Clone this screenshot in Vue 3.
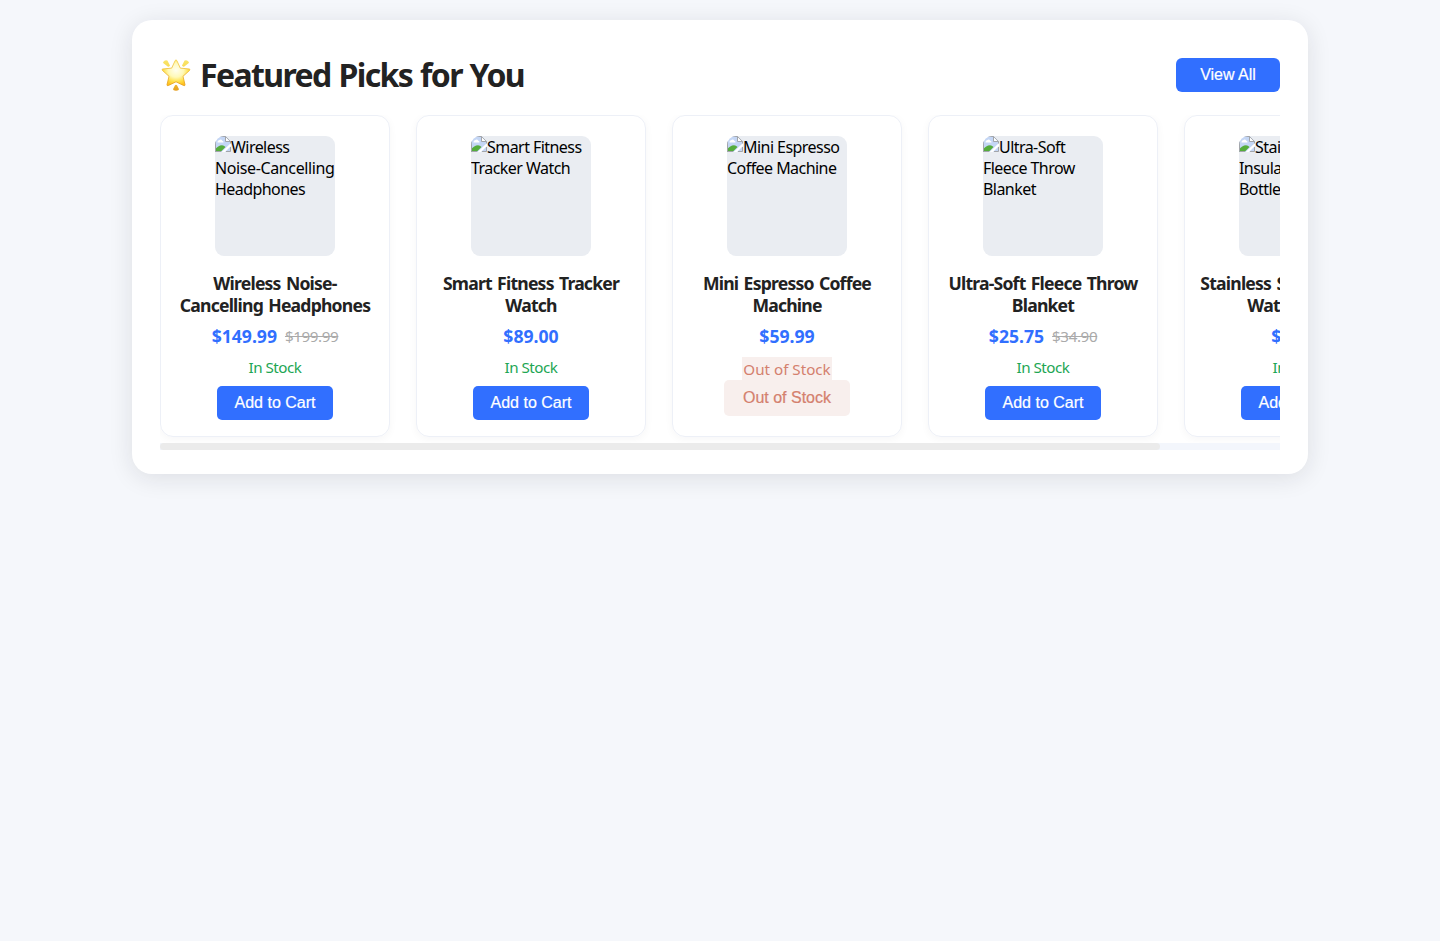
<script setup>
const products = [
  { name: ['Wireless Noise-', 'Cancelling Headphones'], alt: ['Wireless', 'Noise-Cancelling', 'Headphones'], price: '$149.99', old: '$199.99', stock: true },
  { name: ['Smart Fitness Tracker', 'Watch'], alt: ['Smart Fitness', 'Tracker Watch'], price: '$89.00', stock: true },
  { name: ['Mini Espresso Coffee', 'Machine'], alt: ['Mini Espresso', 'Coffee Machine'], price: '$59.99', stock: false },
  { name: ['Ultra-Soft Fleece Throw', 'Blanket'], alt: ['Ultra-Soft', 'Fleece Throw', 'Blanket'], price: '$25.75', old: '$34.90', stock: true },
  { name: ['Stainless Steel Insulated', 'Water Bottle'], alt: ['Stainless Steel', 'Insulated Water', 'Bottle'], price: '$19.99', stock: true },
]
</script>

<template>
  <section class="panel">
    <header class="head">
      <svg class="star" viewBox="0 0 32 34" width="32" height="34">
        <defs>
          <linearGradient id="gold" x1="0" y1="0" x2="0" y2="1">
            <stop offset="0" stop-color="#f9e468" />
            <stop offset="0.6" stop-color="#f6cf3c" />
            <stop offset="1" stop-color="#e59e1e" />
          </linearGradient>
          <linearGradient id="edge" x1="0" y1="0" x2="0" y2="1">
            <stop offset="0" stop-color="#f3cb45" />
            <stop offset="1" stop-color="#e39a16" />
          </linearGradient>
          <radialGradient id="shine" cx="0.5" cy="0.4" r="0.6">
            <stop offset="0" stop-color="#fffef0" />
            <stop offset="0.45" stop-color="#fff9b8" />
            <stop offset="0.75" stop-color="#ffe04a" />
            <stop offset="1" stop-color="#ffbe1a" />
          </radialGradient>
        </defs>
        <path d="M3.200 4Q5 1.400 7.400 2.600L10 7.600Q9.600 9 8 8.700L3.500 5.300Q2.800 4.800 3.200 4ZM28.800 4Q27 1.400 24.600 2.600L22 7.600Q22.400 9 24 8.700L28.500 5.300Q29.200 4.800 28.800 4ZM15 27.300Q16 26.200 17 27.300L18.900 31Q19 32.700 16 32.700Q13 32.700 13.100 31Z" fill="url(#gold)" />
        <path d="M15.200 2.500Q16 1 16.800 2.500L20.300 10.100L29.300 11Q30.600 11.400 29.500 12.500L23 18.300L25 26.700Q25 28.200 23.600 27.500L16 23.800L8.400 27.500Q7 28.200 7 26.700L9 18.300L2.500 12.500Q1.400 11.400 2.700 11L11.700 10.100Z" fill="url(#shine)" stroke="url(#edge)" stroke-width=".8" />
      </svg>
      <h1>Featured Picks for You</h1>
      <button class="btn view">View All</button>
    </header>

    <div class="list">
      <article v-for="p in products" :key="p.price" class="card">
        <div class="thumb">
          <svg class="broken" viewBox="0 0 16 16" width="16" height="16">
            <path d="M0 0H10.500L15.500 5V16H0Z" fill="#c4d6f5" />
            <path d="M2.500 6Q2.500 4.500 4 4.300Q6 2.300 7.300 4.700Q8.700 5 8.500 6.500H2.500Z" fill="#fff" />
            <path d="M0 15.500V13.500Q3 9.500 7 9.300Q9 9.600 10.500 11L6 15.500Z" fill="#55ad3c" />
            <path d="M6.500 16L16 7V10L10 16Z" fill="#fff" />
            <path d="M0 .5H10.500L15.500 5.500V7.500M10.500 .5V5.500H15.500M.5 0V15.500H6M11 15.500H15.500V11" fill="none" stroke="#a2a5aa" />
            <path d="M11 1.500V5H14.500Z" fill="#fff" />
          </svg>
          <div v-for="l in p.alt" :key="l" class="alt" :class="{ loose: l.includes('-Canc') }">{{ l }}</div>
        </div>
        <h2><span v-for="l in p.name" :key="l">{{ l }}</span></h2>
        <div class="prices">
          <span class="price">{{ p.price }}</span>
          <span v-if="p.old" class="old">{{ p.old }}</span>
        </div>
        <template v-if="p.stock">
          <div class="in">In Stock</div>
          <button class="btn add">Add to Cart</button>
        </template>
        <template v-else>
          <div class="out">Out of Stock</div>
          <button class="btn gone">Out of Stock</button>
        </template>
      </article>
    </div>
    <div class="track"><div class="bar"></div></div>
  </section>
</template>

<style>
html { background: #f5f7fb; }
#app { display: flow-root; min-height: 100vh; background: #f5f7fb; }
</style>

<style scoped>
.panel {
  box-sizing: border-box;
  width: 1176px;
  height: 454px;
  margin: 20px auto 0;
  padding: 36px 28px 24px;
  background: #fff;
  border-radius: 20px;
  box-shadow: 0 4px 24px rgba(30, 30, 40, .11);
  font-family: "Noto Sans", sans-serif;
  color: #222;
}
.head { display: flex; align-items: center; height: 38px; }
.star { flex: none; margin-right: 8px; }
h1 { margin: 0; font-size: 32px; line-height: 38px; font-weight: 700; letter-spacing: -1.6px; word-spacing: 1px; white-space: nowrap; }
.btn {
  border: 0;
  padding: 0;
  border-radius: 5px;
  background: #316fff;
  color: #fff;
  font: 16px "Liberation Sans", Arial, sans-serif;
  text-align: center;
  -webkit-text-stroke: .2px currentColor;
}
.view { margin-left: auto; width: 104px; height: 34px; border-radius: 6px; }
.list { display: flex; gap: 26px; overflow: hidden; height: 328px; margin-top: 21px; }
.card {
  box-sizing: border-box;
  flex: 0 0 230px;
  height: 322px;
  padding-top: 20px;
  display: flex;
  flex-direction: column;
  align-items: center;
  border: 1px solid #edf0f7;
  border-radius: 13px;
  box-shadow: 0 2px 8px rgba(30, 34, 55, .04);
}
.thumb { width: 120px; height: 120px; flex: none; border-radius: 9px; background: #eaedf2; overflow: hidden; color: #000; }
.broken { float: left; }
.alt { font-size: 16px; line-height: 21px; letter-spacing: -.55px; white-space: nowrap; position: relative; top: 1px; }
.loose { letter-spacing: -.38px; }
h2 { margin: 16px 0 0; font-size: 17.600px; line-height: 22px; font-weight: 700; letter-spacing: -.8px; word-spacing: 1.500px; text-align: center; white-space: nowrap; }
h2 span { display: block; }
.prices { display: flex; align-items: center; gap: 8px; height: 24px; margin-top: 8px; }
.price { color: #316fff; font-size: 17.600px; font-weight: 700; letter-spacing: 0; }
.old { color: #aaa; font-size: 15.200px; letter-spacing: -.4px; text-decoration: line-through; }
.in { height: 20px; margin-top: 9px; line-height: 20px; font-size: 15.200px; letter-spacing: -.5px; color: #1ea654; }
.add { width: 116px; height: 34px; margin-top: 9px; }
.out { width: 90px; height: 23px; margin-top: 9px; line-height: 25px; text-align: center; white-space: nowrap; font-size: 15.200px; letter-spacing: 0; color: #d4806e; background: #f8efed; }
.gone { width: 126px; height: 36px; color: #d4806e; background: #f8efed; }
.track { height: 7px; background: #f3f6fc; }
.bar { width: 1000px; height: 7px; border-radius: 4px; background: #ebebeb; }
</style>
